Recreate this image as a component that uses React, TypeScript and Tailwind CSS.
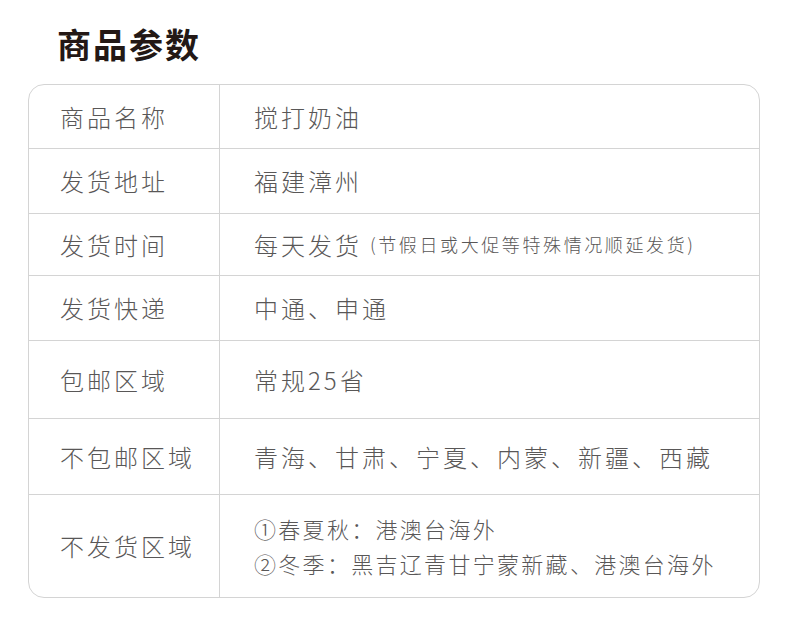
const FONT = "font-['Noto_Sans_CJK_SC','Noto_Sans',sans-serif]";

const ROWS: { label: string; h: string; value: React.ReactNode }[] = [
  { label: '商品名称', h: 'h-[64px]', value: '搅打奶油' },
  { label: '发货地址', h: 'h-[65px]', value: '福建漳州' },
  {
    label: '发货时间',
    h: 'h-[62px]',
    value: (
      <>
        每天发货
        <span className="ml-[8px] text-[18px] tracking-[2.6px]">(节假日或大促等特殊情况顺延发货)</span>
      </>
    ),
  },
  { label: '发货快递', h: 'h-[65px]', value: '中通、申通' },
  { label: '包邮区域', h: 'h-[78px]', value: '常规25省' },
  { label: '不包邮区域', h: 'h-[76px]', value: '青海、甘肃、宁夏、内蒙、新疆、西藏' },
  {
    label: '不发货区域',
    h: 'h-[102px]',
    value: (
      <div className="flex flex-col gap-[4px] text-[22px] tracking-[2.3px] leading-[31px]">
        <span>①春夏秋：港澳台海外</span>
        <span>②冬季：黑吉辽青甘宁蒙新藏、港澳台海外</span>
      </div>
    ),
  },
];

export default function App() {
  return (
    <div className={`w-[790px] h-[625px] bg-white ${FONT}`}>
      <h1 className="pl-[57px] pt-[24px] text-[34px] leading-[40px] font-bold tracking-[2px] text-[#231815]">
        商品参数
      </h1>

      <div className="ml-[28px] mt-[20px] w-[732px] rounded-[16px] border border-[#d4d4d4] overflow-hidden">
        {ROWS.map(({ label, h, value }, i) => (
          <div
            key={i}
            className={`flex ${h} ${i < ROWS.length - 1 ? 'border-b border-[#d4d4d4]' : ''}`}
          >
            <div className="w-[191px] shrink-0 border-r border-[#d4d4d4] flex items-center pl-[31px] text-[24px] tracking-[3px] text-[#595757] font-light">
              {label}
            </div>
            <div className="flex-1 flex items-center pl-[34px] text-[24px] tracking-[3px] text-[#595757] font-light">
              {value}
            </div>
          </div>
        ))}
      </div>
    </div>
  );
}
